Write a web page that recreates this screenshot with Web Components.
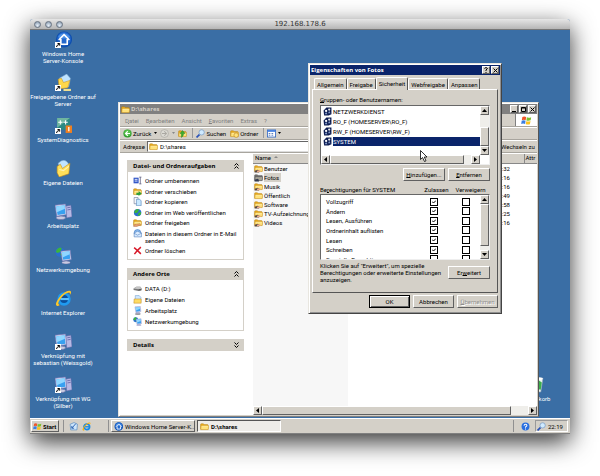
<!DOCTYPE html>
<html lang="de">
<head>
<meta charset="utf-8">
<title>192.168.178.6</title>
<style>
body{margin:0;display:flex;min-height:100vh;background:#fff;box-sizing:border-box;padding:19px 30px 42px;font:6px/7px Roboto,"Liberation Sans",sans-serif;color:#000;overflow:hidden}
</style>
</head>
<body>
<remote-screen name="192.168.178.6">
  <desk-top>
    <desk-item icon="home" shortcut>Windows Home<br>Server-Konsole</desk-item>
    <desk-item icon="netfolder" shortcut>Freigegebene Ordner auf<br>Server</desk-item>
    <desk-item icon="diag" shortcut>SystemDiagnostics</desk-item>
    <desk-item icon="mydocs">Eigene Dateien</desk-item>
    <desk-item icon="pc">Arbeitsplatz</desk-item>
    <desk-item icon="net">Netzwerkumgebung</desk-item>
    <desk-item icon="ie">Internet Explorer</desk-item>
    <desk-item icon="pc" shortcut>Verknüpfung mit<br>sebastian (Weissgold)</desk-item>
    <desk-item icon="pc" shortcut>Verknüpfung mit WG<br>(Silber)</desk-item>
    <desk-item slot="bin" icon="bin">Papierkorb</desk-item>
    <explorer-window slot="windows"></explorer-window>
    <props-dialog slot="windows"></props-dialog>
  </desk-top>
  <task-bar slot="bar"></task-bar>
</remote-screen>

<script>
const base = `
:host,*{box-sizing:border-box}
button,input{font:inherit;color:inherit;margin:0;padding:0;border:0;border-radius:0;background:none;line-height:inherit}
button{white-space:nowrap}
a{color:inherit;text-decoration:none}
u{text-underline-offset:0;text-decoration-thickness:1px}
table{border-collapse:collapse;border-spacing:0}
td,th{padding:0;font-weight:normal;text-align:left}
.raised{background:#d4d0c8;border:1px solid;border-color:#fff #606060 #606060 #fff}
`;
const def = (tag, css, html) => customElements.define(tag, class extends HTMLElement {
  connectedCallback() {
    if (this.shadowRoot) return;
    this.attachShadow({mode: 'open'}).innerHTML = `<style>${base}${css}</style>${html(this)}`;
  }
});

const monitor = (x, y, s) => `<g transform="translate(${x} ${y}) scale(${s})"><ellipse cx="5" cy="11.8" rx="4" ry="1.5" fill="#c9cbe2" stroke="#6d70a6" stroke-width=".5"/><path d="M0 1 9 0 10 9 1.5 10.500Z" fill="#d8dcf2" stroke="#7276b4" stroke-width=".6"/><path d="M1 2 8.200 1.100 9 8.200 2.200 9.300Z" fill="#39a0f0"/><path d="M1 2 8.200 1.100 8.500 4 1.600 7Z" fill="#8fd6ff"/></g>`;
const folder = `<path d="M1 4.500Q1 3 2.500 3H6L7.500 4.500H13Q14.500 4.500 14.500 6V13H1Z" fill="#e8a91c" stroke="#a8740c" stroke-width=".7"/><path d="M2 6.500H15.500L14.500 13.500H1.500Z" fill="#ffe27a" stroke="#c8901a" stroke-width=".7"/><path d="M3 7.500H14" stroke="#fff6c4"/>`;
const globe = `<circle cx="6" cy="6" r="5.500" fill="#2a6fd0"/><path d="M2 3Q6-1 8 2L6 6 3 7 1 6ZM8 6 11 5 11 8 8 11 6 9Z" fill="#3cb43c"/>`;
const icons = {
  home: `<circle cx="8.500" cy="8" r="7.600" fill="#0f4fae"/><circle cx="8.500" cy="7.500" r="6.500" fill="#2368cc"/><path d="M3 5Q8-1 14 5L13 7H4Z" fill="#4a90e6"/><path d="M3.500 8.500 8.500 3.500 13.500 8.500M5.500 7.500V12.500H11.500V7.500" fill="none" stroke="#fff" stroke-width="1.500"/>`,
  netfolder: `<path d="M4 4 11 0 14.500 4 13 12 6 12Z" fill="#bfe4ff" stroke="#7aa6cc" stroke-width=".5"/><path d="M3 5 6 4 8 8 14 6 12 13 4 14Z" fill="#ffd84a" stroke="#c8901a" stroke-width=".5"/><path d="M8 15H15" stroke="#f0e090" stroke-width="2"/>`,
  diag: `<path d="M2 1H14V12H2Z" fill="#2c8a84"/><path d="M2 1H14L2 10Z" fill="#6fb5a0"/><path d="M3 5H7M5 3V7M8 5H12M10 3V7" stroke="#fff"/><rect x="10" y="8" width="6" height="7" fill="#f08020"/><path d="M13 9.500V13.500" stroke="#fff" stroke-width="1.200"/>`,
  mydocs: `<path d="M3 3Q9-3 13 4L12 11H5Z" fill="#bfe4ff" stroke="#7aa6cc" stroke-width=".5"/><path d="M2 6 5 4 7 8 14 3 13 13 4 16 2 12Z" fill="#ffe05a" stroke="#c8901a" stroke-width=".6"/><path d="M4 9 8 10 13 6" fill="none" stroke="#fff4b0"/>`,
  pc: `<path d="M10 3 15 2 16 13 11 14Z" fill="#b7b8e4" stroke="#6567a8" stroke-width=".5"/><path d="M11.500 4.500 14.500 4M11.700 6.500 14.700 6" stroke="#6567a8" stroke-width=".8"/>` + monitor(0, 1, 1.1),
  net: `<g transform="scale(.8)">${globe}</g>` + monitor(5.5, 3, .98),
  ie: `<circle cx="8.500" cy="8.500" r="5.200" fill="#0c4f9c"/><circle cx="8.500" cy="8.500" r="5" fill="none" stroke="#1f9af0" stroke-width="2.600"/><path d="M5 8.500H13" stroke="#5cc0ff" stroke-width="2"/><path d="M2 15Q-1 14 4 7 10 0 14 .8 16.500 1.500 13.500 5.500 15 2 12.500 2.500 9 3 5 8.500 1.500 13.500 4.500 14 3 15.300 2 15Z" fill="#ffc726"/>`,
  iebar: `<circle cx="8.500" cy="8.500" r="5" fill="none" stroke="#1689e6" stroke-width="3"/><path d="M5 8.500H13" stroke="#1689e6" stroke-width="2.400"/><path d="M2 15Q-1 14 4 7 10 0 14 .8 16.500 1.500 13.500 5.500 15 2 12.500 2.500 9 3 5 8.500 1.500 13.500 4.500 14 3 15.300 2 15Z" fill="#ffb000"/>`,
  bin: `<path d="M2 3 14 2 12 15 4 15Z" fill="#eaf6f2" stroke="#9ab" stroke-width=".6"/><path d="M10 4 13 6 12 13 8 12Z" fill="#3cae4c"/><ellipse cx="8" cy="2.500" rx="6" ry="1.500" fill="#fff"/>`,
  folder,
  shared: folder + `<path d="M1 14Q1 10.500 4 11 6 9.500 8 11L10 12 9 15H1Z" fill="#5a4a42"/><path d="M5 12 11 11 12 13 6 15Z" fill="#f0b090"/>`,
  sharedsel: `<path d="M1 4.500Q1 3 2.500 3H6L7.500 4.500H14.500V13H1Z" fill="#76736a" stroke="#4a4a50" stroke-width=".7"/><path d="M2 6.500H15.500L14.500 13.500H1.500Z" fill="#a8a596" stroke="#50505a"/><path d="M1 14Q1 10.500 4 11 6 9.500 8 11L9 15H1Z" fill="#333a50"/>`,
  rename: `<rect x="1" y="3" width="9" height="10" fill="#3358c8"/><path d="M3 6H8M3 9H8" stroke="#fff" stroke-width="1.500"/><path d="M11 2H15M13 2V14M11 14H15" stroke="#557" stroke-width="1.300"/>`,
  move: folder + `<path d="M6 14 6 10 10 10 10 7 15.500 11.500 10 16V14Z" fill="#2f9e3a"/>`,
  copy: `<path d="M2 1H9V12H2Z" fill="#fff" stroke="#568" /><path d="M6 4H12L14.500 7V15.500H6Z" fill="#c8e8ff" stroke="#4a7ab0"/>`,
  web: `<g transform="translate(1 1) scale(1.200)">${globe}</g>`,
  share: folder + `<path d="M1 15Q2 10 6 11L12 10 14 12 7 15Z" fill="#e8a070" stroke="#96502c" stroke-width=".6"/>`,
  mail: `<circle cx="8" cy="7" r="6" fill="#8fc0f4" stroke="#3a70b8"/><path d="M2 7 8 4 15 7V14H2Z" fill="#dcecff" stroke="#4a7ab8"/><path d="M2 7.500 8 11 15 7.500" fill="none" stroke="#4a7ab8"/>`,
  del: `<path d="M2 3Q7 7 14 14M14 2Q8 7 2.500 14.500" fill="none" stroke="#d81828" stroke-width="2.600"/>`,
  drive: `<path d="M1 8 6 5H13L15.500 8V11L10 12.500 1 10.500Z" fill="#777"/><path d="M1 8 6 5H13L15.500 8 10 9.500Z" fill="#c4c4c4"/><path d="M10 10.500H14" stroke="#222"/>`,
  docs: `<path d="M4 1H11L14 4V12H4Z" fill="#cfe8ff" stroke="#5a8ac0" stroke-width=".8"/><path d="M2 7H14.500V14.500H1.500Z" fill="#ffdc64" stroke="#b8801a" stroke-width=".8"/>`,
  pcs: monitor(3.5, .5, 1.05) + `<path d="M4 14.500H13" stroke="#666" stroke-width="1.500"/>`,
  back: `<circle cx="8" cy="8" r="7.300" fill="#2d9b2c"/><circle cx="8" cy="7" r="5.800" fill="#56c04a"/><path d="M8.500 4 4.500 8 8.500 12M5 8H12.500" fill="none" stroke="#fff" stroke-width="2"/>`,
  fwd: `<circle cx="8" cy="8" r="7" fill="#dcdad4" stroke="#a09e98"/><path d="M7.500 4 11.500 8 7.500 12M11 8H3.500" fill="none" stroke="#aaa8a2" stroke-width="1.800"/>`,
  up: folder + `<path d="M6 15V8H3.500L8 2.500 12.500 8H10Q10 13 6 15Z" fill="#3cae30" stroke="#1c7a18" stroke-width=".7"/>`,
  search: `<path d="M6.500 9.500 1 15" stroke="#2a52b8" stroke-width="3"/><circle cx="10" cy="6" r="4.700" fill="#cfeaff" stroke="#7899c0" stroke-width="1.300"/>`,
  folders: folder + `<circle cx="11" cy="11" r="4" fill="#ffe27a" stroke="#b8801a"/>`,
  views: `<rect x=".7" y="1.700" width="14.600" height="12.600" fill="#fff" stroke="#2a62c0" stroke-width="1.400"/><path d="M1 3.500H15" stroke="#3a7ae0" stroke-width="3"/><path d="M3 8H6M8 8H11M3 11H6M8 11H11" stroke="#4a72b8" stroke-width="1.600"/>`,
  flag: `<path d="M2 3Q4.500 1.500 7.500 3L6.800 7.500Q4 6 1.200 7.500Z" fill="#f0562a"/><path d="M8.500 3.400Q11.500 4.600 14.800 3.200L14 7.700Q11 9 7.800 7.900Z" fill="#7ec02c"/><path d="M1 8.500Q4 7 6.600 8.500L6 13Q3 11.500.3 13Z" fill="#3a7ee0"/><path d="M7.600 9Q11 10.200 13.800 8.800L13 13.300Q10 14.500 7 13.400Z" fill="#fcc21c"/>`,
  users: `<path d="M1 6 6 1H15V13L10 15H2Z" fill="#0c1c50"/><circle cx="5.500" cy="7" r="2" fill="#fff"/><circle cx="11" cy="4.500" r="2" fill="#e8e8e8"/><path d="M3 13 5.500 9 8 13ZM9 11 11 7 13.500 11Z" fill="#8aa0d0"/>`,
  showdesk: `<path d="M2 4 9 1 15 4 14 14H3Z" fill="#cfe6fa" stroke="#3a78b8"/><path d="M5 11 12 3M5 7V11H9" fill="none" stroke="#2a62b0" stroke-width="1.700"/>`,
  help: `<circle cx="8" cy="8" r="7" fill="#2a6fe0"/><path d="M5.500 6.500Q5.500 4 8 4 10.500 4 10.500 6 10.500 7.500 8 8.800V10M8 11.500V13.300" fill="none" stroke="#fff" stroke-width="1.800"/>`
};
const arrowPaths = {up: 'M0 3H5L2.500 0Z', down: 'M0 0H5L2.500 3Z', left: 'M3 0V5L0 2.500Z', right: 'M0 0V5L3 2.500Z'};
const arrow = d => `<svg width="${d == 'left' || d == 'right' ? 3 : 5}" height="${d == 'left' || d == 'right' ? 5 : 3}" aria-hidden="true"><path d="${arrowPaths[d]}"/></svg>`;

def('x-icon', `:host{display:block;flex:none;width:9px;height:9px}svg{display:block;width:100%;height:100%}`,
  e => `<svg viewBox="0 0 16 16" aria-hidden="true">${icons[e.getAttribute('name')]}</svg>`);

def('remote-screen', `
:host{flex:1;display:flex;flex-direction:column;min-width:0;border-radius:3px 3px 0 0;box-shadow:0 8px 24px rgba(0,0,0,.8);background:#3a6ea5}
header{height:11px;flex:none;display:grid;grid-template-columns:1fr auto 1fr;align-items:center;border-radius:3px 3px 0 0;background:linear-gradient(#e6e6e6,#b6b6b6);border-bottom:1px solid #777;font:7px/9px "DejaVu Sans",sans-serif;color:#333}
.dots{display:flex;gap:4px;padding-left:4px}
.dots button{width:7px;height:7px;border-radius:50%;border:1px solid #697482;background:radial-gradient(circle at 50% 70%,#e4edf6,#7f92a8)}
slot[name=bar]{display:block}`,
  e => `<header><div class="dots"><button aria-label="Schließen"></button><button aria-label="Minimieren"></button><button aria-label="Zoomen"></button></div><span>${e.getAttribute('name')}</span></header><slot></slot><slot name="bar"></slot>`);

def('desk-top', `
:host{flex:1;display:block;position:relative;overflow:hidden;min-height:0}
.icons{display:grid;grid-template-rows:repeat(9,1fr);width:66px;height:100%}
.bin{position:absolute;right:16px;bottom:0;width:36px;height:43px}`,
  () => `<div class="icons"><slot></slot></div><div class="bin"><slot name="bin"></slot></div><slot name="windows"></slot>`);

def('desk-item', `
:host{display:flex;flex-direction:column;align-items:center;gap:2px;padding-top:1px;color:#fff;text-align:center;white-space:nowrap;min-height:0}
.pic{position:relative}x-icon{width:17px;height:17px}
.cut{position:absolute;left:0;bottom:0;width:6px;height:6px;background:#fff;display:block}`,
  e => `<div class="pic"><x-icon name="${e.getAttribute('icon')}"></x-icon>${e.hasAttribute('shortcut') ? '<svg class="cut" viewBox="0 0 6 6" aria-hidden="true"><path d="M1.500 5Q1.500 3 4 2.500M2.500 1.500H4.700V3.700" fill="none" stroke="#000"/></svg>' : ''}</div><span><slot></slot></span>`);

def('task-bar', `
:host{display:flex;align-items:stretch;height:16px;padding:1px 2px 1px 1px;background:#d4d0c8;border-top:1px solid #fff;border-bottom:1px solid #808080;gap:2px}
button{display:flex;align-items:center;gap:2px}
.start{width:28px;font-weight:bold;padding-left:1px;gap:1px}
.sep{width:1px;background:#909090;border:0;margin:0 2px}
.quick{display:flex;align-items:center;gap:4px;width:36px;padding-left:1px}
.task{width:84px;padding-left:2px;overflow:hidden}
.on{background:#eeece8;border-color:#555 #fff #fff #555;font-weight:bold}
.fill{flex:1}
.tray{display:flex;align-items:center;gap:2px;width:33px;padding-left:1px;border:1px solid;border-color:#999 #fff #fff #999}
.help{padding:0 3px}`,
  () => `<button class="start raised"><x-icon name="flag"></x-icon>Start</button><span class="sep"></span>
<div class="quick"><button aria-label="Desktop anzeigen"><x-icon name="showdesk"></x-icon></button><button aria-label="Internet Explorer"><x-icon name="iebar"></x-icon></button></div><span class="sep" style="margin-right:0"></span>
<button class="task raised"><x-icon name="home"></x-icon>Windows Home Server-K...</button>
<button class="task raised on"><x-icon name="folder"></x-icon>D:\\shares</button>
<span class="fill"></span><span class="sep"></span><button class="help" aria-label="Hilfe"><x-icon name="help"></x-icon></button>
<div class="tray"><x-icon name="search"></x-icon>22:19</div>`);

def('scroll-bar', `
:host{display:flex;background:#efeeea;flex:none}
:host([dir=v]){flex-direction:column;width:9px}
:host([dir=h]){height:9px}
button{display:grid;place-items:center;flex:none;width:9px;height:9px}
.thumb{flex:var(--thumb,1) 1 0}.pre{flex:var(--pre,0) 1 0}.post{flex:var(--post,0) 1 0}`,
  e => { const v = e.getAttribute('dir') == 'v';
    return `<button class="raised" aria-label="Zurück">${arrow(v ? 'up' : 'left')}</button><span class="pre"></span><span class="thumb raised"></span><span class="post"></span><button class="raised" aria-label="Vor">${arrow(v ? 'down' : 'right')}</button>`; });

def('task-pane', `
:host{display:block}
h2{margin:0;height:12px;display:flex;justify-content:space-between;align-items:center;padding:0 5px 0 6px;background:#d4d0c8;font:bold 6px/8px "Open Sans",sans-serif}
.body{display:flex;flex-direction:column;justify-content:space-between;border:1px solid #d4d0c8;border-top:0;padding:5px}
:host([closed]) .body{display:none}
:host([closed]) svg{transform:scaleY(-1)}`,
  e => `<h2><span>${e.getAttribute('label')}</span><svg width="5" height="6" aria-hidden="true"><path d="M.5 2.500 2.500.5 4.500 2.500M.5 5.500 2.500 3.500 4.500 5.500" fill="none" stroke="#000"/></svg></h2><div class="body" style="min-height:var(--h)"><slot></slot></div>`);

def('task-link', `:host{display:block}a{display:flex;gap:3px}x-icon{margin:-1px 0}span{min-width:0}`,
  e => `<a href="#"><x-icon name="${e.getAttribute('icon')}"></x-icon><span><slot></slot></span></a>`);

const files = [['Benutzer', ':32', 'shared'], ['Fotos', ':16', 'sharedsel'], ['Musik', ':16', 'shared'], ['Öffentlich', ':49', 'folder'], ['Software', ':58', 'shared'], ['TV-Aufzeichnung', ':25', 'shared'], ['Videos', ':16', 'shared']];

def('explorer-window', `
:host{position:absolute;left:88px;right:31px;top:72px;bottom:1px;display:flex;flex-direction:column;background:#d4d0c8;border:1px solid;border-color:#e8e6e0 #555 #808080 #e8e6e0;box-shadow:inset 1px 1px #fff;padding:1px}
.title{display:flex;align-items:center;height:10px;gap:1px;background:#808080;color:#d4d0c8;font:bold 6px/8px "Open Sans",sans-serif;padding:0 1px}
.title span{flex:1}
.title button{width:8px;height:8px;color:#000;display:grid;place-items:center}
.row{display:flex;align-items:center;height:13px;border-bottom:1px solid #a8a59e;box-shadow:0 1px #fff;padding-left:3px}
.menu{gap:7px;color:#808080;padding-left:5px}
.logo{margin-left:auto;align-self:stretch;width:22px;background:#fff;display:grid;place-items:center;border-left:1px solid #808080}
.logo x-icon{width:11px;height:11px}
.tools button{display:flex;align-items:center;gap:1px}
.tools svg{width:3px;height:2px;margin:0 3px}
.tools i{width:1px;height:10px;background:#999;margin:0 3px 0 5px}
.addr{gap:2px}
.addr label{width:22px}
.field{flex:1;display:flex;align-items:center;height:11px;background:#fff;border:1px solid;border-color:#666 #ddd #ddd #666;padding-left:1px;gap:2px}
.field input{flex:1;min-width:0}
.addr button{width:36px;text-align:left}
.main{flex:1;display:flex;min-height:0;background:#fff;margin-top:1px}
aside{width:133px;flex:none;display:flex;flex-direction:column;gap:8px;padding:6px 9px 0 7px}
.list{flex:1;min-width:0;display:flex;flex-direction:column;background:linear-gradient(90deg,#f7f7f7 95px,#fff 95px)}
table{width:100%;table-layout:fixed}
th{height:9px;background:#d4d0c8;border-bottom:1px solid #888;border-right:1px solid #888;line-height:8px;padding-left:2px;white-space:nowrap}
th:last-child{border-right:0;overflow:hidden;padding-left:1px}
td{height:9px;line-height:9px;white-space:nowrap}
.n{display:flex;align-items:center;padding-left:1px;gap:1px}
.sel{background:#d4d0c8;padding-right:2px}
.t{text-align:right;padding-right:14px}
scroll-bar{margin-top:auto;--thumb:250;--post:17}`,
  () => `<div class="title"><x-icon name="folder"></x-icon><span>D:\\shares</span><button class="raised" aria-label="Minimieren"><svg width="4" height="5"><path d="M0 4.500H4" stroke="#000"/></svg></button><button class="raised" aria-label="Maximieren"><svg width="5" height="5"><path d="M.5.5H4.500V4.500H.5ZM.5 1H4.500" fill="none" stroke="#000"/></svg></button><button class="raised" aria-label="Schließen"><svg width="5" height="5"><path d="M.5.5 4.500 4.500M4.500.5.5 4.500" stroke="#000"/></svg></button></div>
<div class="row menu"><button><u>D</u>atei</button><button><u>B</u>earbeiten</button><button><u>A</u>nsicht</button><button><u>F</u>avoriten</button><button>E<u>x</u>tras</button><button><u>?</u></button><span class="logo"><x-icon name="flag"></x-icon></span></div>
<div class="row tools"><button><x-icon name="back"></x-icon>Zurück</button><svg><path d="M0 0H3L1.500 2Z"/></svg><button aria-label="Vorwärts"><x-icon name="fwd"></x-icon></button><svg><path d="M0 0H3L1.500 2Z" fill="#888"/></svg><button aria-label="Aufwärts"><x-icon name="up"></x-icon></button><i></i><button><x-icon name="search"></x-icon>Suchen</button><span style="width:4px"></span><button><x-icon name="folders"></x-icon>Ordner</button><i></i><button aria-label="Ansichten"><x-icon name="views"></x-icon></button><svg style="margin:0 2px"><path d="M0 0H3L1.500 2Z"/></svg></div>
<div class="row addr"><label for="a">Adre<u>ss</u>e</label><div class="field"><x-icon name="folder"></x-icon><input id="a" value="D:\\shares"></div><button>Wechseln zu</button></div>
<div class="main"><aside>
<task-pane label="Datei- und Ordneraufgaben" style="--h:88px"><task-link icon="rename">Ordner umbenennen</task-link><task-link icon="move">Ordner verschieben</task-link><task-link icon="copy">Ordner kopieren</task-link><task-link icon="web">Ordner im Web veröffentlichen</task-link><task-link icon="share">Ordner freigeben</task-link><task-link icon="mail">Dateien in diesem Ordner in E-Mail<br>senden</task-link><task-link icon="del">Ordner löschen</task-link></task-pane>
<task-pane label="Andere Orte" style="--h:51px"><task-link icon="drive">DATA (D:)</task-link><task-link icon="docs">Eigene Dateien</task-link><task-link icon="pcs">Arbeitsplatz</task-link><task-link icon="net">Netzwerkumgebung</task-link></task-pane>
<task-pane label="Details" closed></task-pane></aside>
<div class="list"><table><colgroup><col style="width:95px"><col><col style="width:13px"></colgroup><tr><th>Name &nbsp;<svg width="4" height="5" aria-hidden="true"><path d="M0 3 2 1 4 3Z" fill="#888"/></svg></th><th></th><th>Attr</th></tr>
${files.map(f => `<tr><td><div class="n"><x-icon name="${f[2]}"></x-icon><span class="${f[0] == 'Fotos' ? 'sel' : ''}">${f[0]}</span></div></td><td class="t">${f[1]}</td><td></td></tr>`).join('')}</table>
<scroll-bar dir="h"></scroll-bar></div></div>`);

const perms = ['Vollzugriff', 'Ändern', 'Lesen, Ausführen', 'Ordnerinhalt auflisten', 'Lesen', 'Schreiben', 'Spezielle Berechtigungen'];

def('props-dialog', `
:host{position:absolute;left:278px;top:33px;width:194px;display:flex;flex-direction:column;background:#d4d0c8;border:1px solid;border-color:#e8e6e0 #444 #444 #e8e6e0;box-shadow:inset 1px 1px #fff,inset -1px -1px #909090;padding:1px}
.title{display:flex;align-items:center;height:10px;gap:1px;background:#0a246a;color:#fff;font:bold 6px/8px "Open Sans",sans-serif;padding:0 1px}
.title span{flex:1}
.title button{width:8px;height:8px;color:#000;display:grid;place-items:center}
.tabs{display:flex;align-items:flex-end;padding:2px 3px 0 4px;height:14px}
.tabs button{height:11px;padding:0 2px;border:1px solid;border-color:#fff #555 transparent #fff;border-bottom:0;border-radius:2px 2px 0 0}
.tabs .on{height:13px;padding:0 2px 1px;background:#d4d0c8;position:relative;margin-bottom:-1px}
.page{margin:0 2px;border:1px solid;border-color:#fff #555 #555 #fff;padding:6px 7px 0;height:204px;display:flex;flex-direction:column}
.box{display:flex;background:#fff;border:1px solid;border-color:#666 #eee #eee #666}
.users{height:60px;flex-direction:column;margin-top:2px;flex:none}
.in{display:flex;flex:1;min-height:0}
ul{flex:1;margin:0;padding:0 0 0 2px;list-style:none}
li{display:flex;align-items:center;gap:1px;height:10px}
li span{flex:1;line-height:9px}
.sel span{background:#0a246a;color:#fff}
.btns{display:flex;justify-content:flex-end;gap:3px}
.b{width:42px;height:13px;text-align:center;flex:none}
.page>.btns{margin-top:3px}
.cap{display:grid;grid-template-columns:1fr 29px 39px;margin-top:5px}
.cap span{text-align:center}.cap span:first-child{text-align:left}
.perm{height:66px;margin-top:1px;flex:none}
.clip{flex:1;overflow:hidden;padding-top:2px}
table{width:100%;height:67px}
td{padding-left:5px;height:9px;line-height:7px;white-space:nowrap}
td+td{width:32px;padding:0}
td:last-child{width:18px}
input{appearance:none;display:block;width:8px;height:8px;border:1px solid #000;background:#fff}
label{position:relative;display:block;width:8px}
label svg{position:absolute;left:2px;top:2px}
.note{display:flex;justify-content:space-between;align-items:center;margin-top:2px}
.note p{margin:0;white-space:nowrap;width:120px}
footer{display:flex;justify-content:flex-end;gap:3px;padding:2px 2px 4px}
footer .b{width:41px}
.def{border:1px solid #000;box-shadow:inset 1px 1px #fff,inset -1px -1px #606060}
.off{color:#909090;text-shadow:1px 1px #fff}
.cursor{position:absolute;left:111px;top:86px}`,
  () => `<div class="title"><span>Eigenschaften von Fotos</span><button class="raised" aria-label="Hilfe"><svg width="4" height="6"><path d="M.5 1.500Q2-.5 3.500 1.500L2 3V4M2 5V6" fill="none" stroke="#000"/></svg></button><button class="raised" aria-label="Schließen"><svg width="5" height="5"><path d="M.5.5 4.500 4.500M4.500.5.5 4.500" stroke="#000"/></svg></button></div>
<div class="tabs"><button>Allgemein</button><button>Freigabe</button><button class="on">Sicherheit</button><button>Webfreigabe</button><button>Anpassen</button></div>
<div class="page"><div><u>G</u>ruppen- oder Benutzernamen:</div>
<div class="box users"><div class="in"><ul role="listbox" aria-label="Gruppen- oder Benutzernamen">${['NETZWERKDIENST', 'RO_F (HOMESERVER\\RO_F)', 'RW_F (HOMESERVER\\RW_F)', 'SYSTEM'].map(n => `<li role="option" class="${n == 'SYSTEM' ? 'sel' : ''}"><x-icon name="users"></x-icon><span>${n}</span></li>`).join('')}</ul><scroll-bar dir="v" style="--pre:13;--thumb:19"></scroll-bar></div><scroll-bar dir="h" style="--thumb:134;--post:7;margin-right:9px"></scroll-bar></div>
<div class="btns"><button class="b raised"><u>H</u>inzufügen...</button><button class="b raised"><u>E</u>ntfernen</button></div>
<div class="cap"><span>Be<u>r</u>echtigungen für SYSTEM</span><span>Zulassen</span><span>Verweigern</span></div>
<div class="box perm"><div class="clip"><table>${perms.map((p, i) => `<tr><td>${p}</td>${[1, 0].map(c => `<td><label><input type="checkbox" aria-label="${p} ${c ? 'zulassen' : 'verweigern'}"${c && i < 6 ? ' checked' : ''}>${c && i < 6 ? '<svg width="4" height="4" aria-hidden="true"><path d="M0 1.500 1.500 3 4 .5" fill="none" stroke="#000"/></svg>' : ''}</label></td>`).join('')}</tr>`).join('')}</table></div><scroll-bar dir="v" style="--thumb:42;--post:4"></scroll-bar></div>
<div class="note"><p>Klicken Sie auf "Erweitert", um spezielle<br>Berechtigungen oder erweiterte Einstellungen<br>anzuzeigen.</p><button class="b raised">Er<u>w</u>eitert</button></div></div>
<footer><button class="b raised def">OK</button><button class="b raised">Abbrechen</button><button class="b raised off" disabled><u>Ü</u>bernehmen</button></footer>
<svg class="cursor" width="9" height="12" aria-hidden="true"><path d="M.5.5V9.500L2.500 7.500 4.500 11.500 6 10.800 4.300 7H7Z" fill="#fff" stroke="#000" stroke-width=".8"/></svg>`);
</script>
</body>
</html>
